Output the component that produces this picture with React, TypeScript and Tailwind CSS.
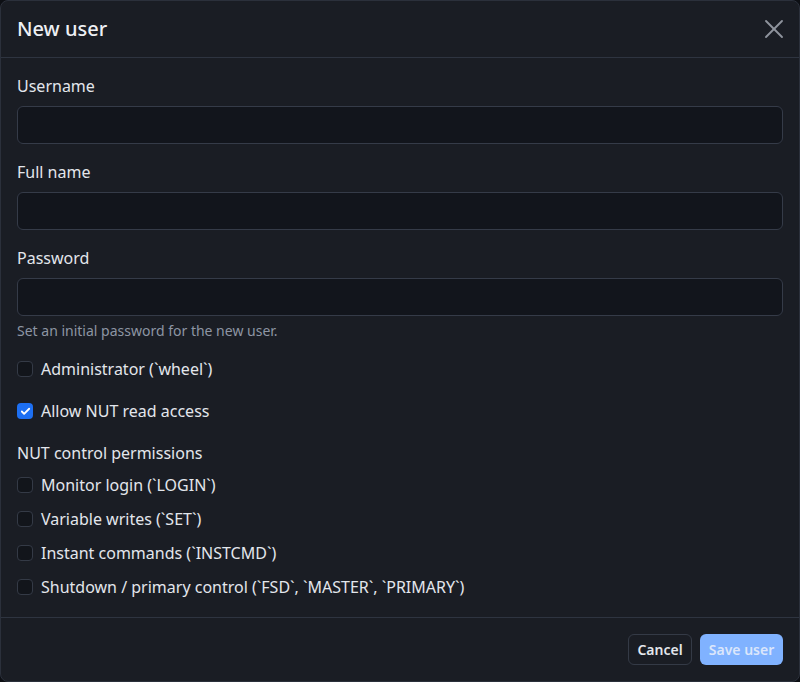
import React from 'react';
import { X, Check } from 'lucide-react';

interface CheckRowProps {
  label: string;
  checked?: boolean;
  className?: string;
}

const CheckRow: React.FC<CheckRowProps> = ({ label, checked, className }) => (
  <label className={`flex items-center gap-2 h-6 ${className ?? ''}`}>
    {checked ? (
      <span className="w-4 h-4 rounded-[4px] bg-[#1d6ff2] flex items-center justify-center">
        <Check size={11} strokeWidth={4} className="text-white" />
      </span>
    ) : (
      <span className="w-4 h-4 rounded-[4px] border border-[#343a46] bg-[#12151b]" />
    )}
    <span className="text-[16px] text-[#e3e6ec]">{label}</span>
  </label>
);

const Field: React.FC<{ label: string; className?: string }> = ({ label, className }) => (
  <div className={className}>
    <div className="text-[16px] leading-6 text-[#e3e6ec]">{label}</div>
    <input
      type="text"
      className="mt-2 block w-full h-[38px] rounded-md border border-[#353b48] bg-[#12151c] px-3 text-[#e3e6ec] outline-none"
    />
  </div>
);

export default function App() {
  return (
    <div className="w-[800px] h-[682px] bg-[#0d0f14]" style={{ fontFamily: '"Noto Sans", "Open Sans", sans-serif' }}>
      <div className="w-full h-full flex flex-col rounded-lg border border-[#2b303b] bg-[#1a1d24] overflow-hidden">
        <div className="h-[57px] shrink-0 flex items-center justify-between px-4 border-b border-[#2e3440]">
          <h1 className="text-[20px] font-medium text-[#eef0f4]">New user</h1>
          <X size={32} strokeWidth={1.4} className="text-[#8f949d] mr-[-7px]" />
        </div>
        <div className="flex-1 px-4 pt-[16px]">
          <Field label="Username" />
          <Field label="Full name" className="mt-4" />
          <Field label="Password" className="mt-4" />
          <div className="mt-[5px] text-[14px] leading-5 text-[#8d95a3]">Set an initial password for the new user.</div>
          <CheckRow label="Administrator (`wheel`)" className="mt-[16px]" />
          <CheckRow label="Allow NUT read access" checked className="mt-[18px]" />
          <div className="mt-[18px] text-[16px] leading-6 text-[#e3e6ec]">NUT control permissions</div>
          <div className="mt-2 flex flex-col gap-[10px]">
            <CheckRow label="Monitor login (`LOGIN`)" />
            <CheckRow label="Variable writes (`SET`)" />
            <CheckRow label="Instant commands (`INSTCMD`)" />
            <CheckRow label="Shutdown / primary control (`FSD`, `MASTER`, `PRIMARY`)" />
          </div>
        </div>
        <div className="h-[64px] shrink-0 flex items-center justify-end gap-2 px-4 border-t border-[#2e3440]">
          <button className="h-[31px] w-[64px] rounded-md border border-[#343a46] text-[14px] font-semibold text-[#e3e6ec]">
            Cancel
          </button>
          <button className="h-[31px] w-[83px] rounded-md bg-[#80b2ff] text-[14px] font-semibold text-[#dbe6fb]">
            Save user
          </button>
        </div>
      </div>
    </div>
  );
}
